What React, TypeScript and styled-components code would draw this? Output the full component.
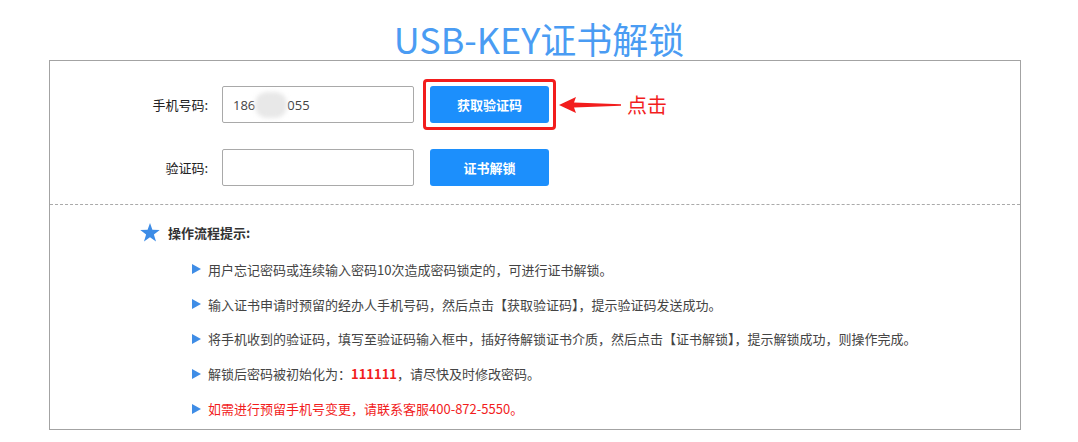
import React from 'react';
import styled, { createGlobalStyle } from 'styled-components';

const GlobalStyle = createGlobalStyle`
  html, body {
    margin: 0;
    padding: 0;
    background: #fff;
  }
  body {
    font-family: "Noto Sans CJK SC", "Noto Sans", sans-serif;
    color: #333;
  }
`;

// Styled components
const Page = styled.div`
  width: 1078px;
  height: 442px;
  overflow: hidden;
`;

const Title = styled.h1`
  margin: 0;
  height: 60px;
  line-height: 76px;
  text-align: center;
  font-size: 36px;
  font-weight: normal;
  color: #4a9cf3;
`;

const Panel = styled.div`
  margin-left: 49px;
  width: 972px;
  height: 370px;
  box-sizing: border-box;
  border: 1px solid #a3a3a3;
`;

const FormSection = styled.div`
  display: flex;
  flex-direction: column;
  gap: 26px;
  padding: 25px 0 18px;
  border-bottom: 1px dashed #aaa;
`;

const FormRow = styled.div`
  display: flex;
  align-items: center;
  height: 37px;
`;

const Label = styled.label`
  width: 158px;
  padding-right: 14px;
  text-align: right;
  font-size: 13px;
  color: #222;
`;

const InputBox = styled.div`
  width: 192px;
  height: 37px;
  box-sizing: border-box;
  border: 1px solid #a9a9a9;
  border-radius: 2px;
  display: flex;
  align-items: center;
  padding-left: 10px;
  font-family: "Open Sans", "Noto Sans", sans-serif;
  font-size: 13px;
  color: #444;
`;

const Blur = styled.span`
  display: inline-block;
  width: 32px;
  height: 26px;
  background: #e8e8e8;
  border-radius: 12px;
  filter: blur(2px);
`;

const ButtonWrap = styled.div<{ $highlight?: boolean }>`
  display: flex;
  border-radius: 4px;
  margin: ${p => (p.$highlight ? '-7px 0 -7px 9px' : '0 0 0 16px')};
  padding: ${p => (p.$highlight ? '4px' : '0')};
  border: ${p => (p.$highlight ? '3px solid #f21d1d' : 'none')};
`;

const PrimaryButton = styled.button`
  width: 119px;
  height: 37px;
  border: none;
  border-radius: 3px;
  background: #1c8ffc;
  color: #fff;
  font-family: "Noto Sans CJK SC", sans-serif;
  font-size: 13px;
  font-weight: bold;
  cursor: pointer;
`;

const Hint = styled.div`
  display: flex;
  align-items: center;
  margin-left: 3px;
  gap: 6px;
`;

const HintText = styled.span`
  font-size: 20px;
  color: #f21d1d;
`;

const Tips = styled.div`
  padding: 14px 0 0 90px;
`;

const TipsHead = styled.div`
  display: flex;
  align-items: center;
  gap: 8px;
  height: 26px;
  font-size: 13px;
  font-weight: bold;
  color: #333;
`;

const TipList = styled.ul`
  list-style: none;
  margin: 7px 0 0 52px;
  padding: 0;
  display: flex;
  flex-direction: column;
`;

const TipItem = styled.li<{ $alert?: boolean }>`
  display: flex;
  align-items: center;
  height: 34.8px;
  font-size: 13px;
  color: ${p => (p.$alert ? '#f21d1d' : '#444')};
`;

const Bullet = styled.span`
  width: 0;
  height: 0;
  border-top: 5px solid transparent;
  border-bottom: 5px solid transparent;
  border-left: 9px solid #3f8de6;
  margin-right: 7px;
`;

const Strong = styled.b`
  color: #f21d1d;
  font-weight: bold;
`;

function Star() {
  return (
    <svg width="20" height="19" viewBox="0 0 24 23">
      <polygon
        points="12,0 14.9,8.3 23.8,8.5 16.7,13.9 19.3,22.4 12,17.3 4.7,22.4 7.3,13.9 0.2,8.5 9.1,8.3"
        fill="#3d8ce6"
      />
    </svg>
  );
}

function Arrow() {
  return (
    <svg width="62" height="20" viewBox="0 0 62 20">
      <polygon points="0,10 17,2 15,7.5 62,9.3 62,10.7 15,12.5 17,18" fill="#f21d1d" />
    </svg>
  );
}

const tips = [
  '用户忘记密码或连续输入密码10次造成密码锁定的，可进行证书解锁。',
  '输入证书申请时预留的经办人手机号码，然后点击【获取验证码】，提示验证码发送成功。',
  '将手机收到的验证码，填写至验证码输入框中，插好待解锁证书介质，然后点击【证书解锁】，提示解锁成功，则操作完成。',
];

export default function App() {
  return (
    <Page>
      <GlobalStyle />
      <Title>USB-KEY证书解锁</Title>
      <Panel>
        <FormSection>
          <FormRow>
            <Label>手机号码:</Label>
            <InputBox>
              186<Blur />055
            </InputBox>
            <ButtonWrap $highlight>
              <PrimaryButton>获取验证码</PrimaryButton>
            </ButtonWrap>
            <Hint>
              <Arrow />
              <HintText>点击</HintText>
            </Hint>
          </FormRow>
          <FormRow>
            <Label>验证码:</Label>
            <InputBox />
            <ButtonWrap>
              <PrimaryButton>证书解锁</PrimaryButton>
            </ButtonWrap>
          </FormRow>
        </FormSection>
        <Tips>
          <TipsHead>
            <Star />
            操作流程提示:
          </TipsHead>
          <TipList>
            {tips.map(t => (
              <TipItem key={t}>
                <Bullet />
                {t}
              </TipItem>
            ))}
            <TipItem>
              <Bullet />
              解锁后密码被初始化为：<Strong>111111</Strong>，请尽快及时修改密码。
            </TipItem>
            <TipItem $alert>
              <Bullet />
              如需进行预留手机号变更，请联系客服400-872-5550。
            </TipItem>
          </TipList>
        </Tips>
      </Panel>
    </Page>
  );
}
